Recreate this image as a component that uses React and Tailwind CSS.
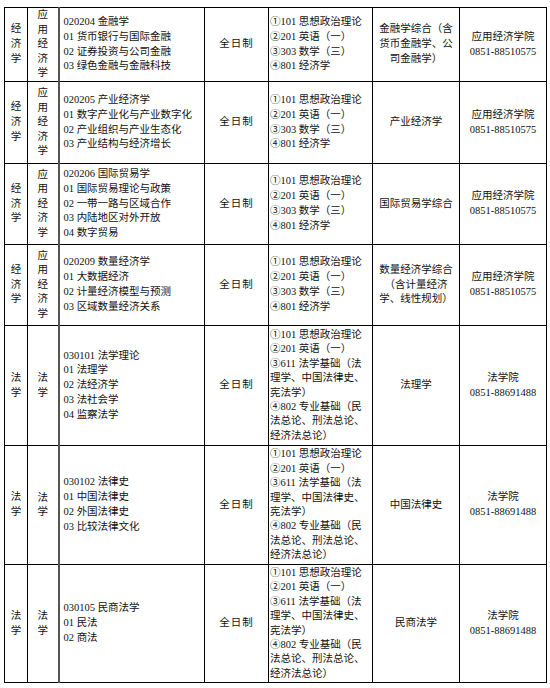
const font = { fontFamily: '"Liberation Serif", "Noto Sans CJK SC", serif' };

const econ5 = ["①101 思想政治理论", "②201 英语（一）", "③303 数学（三）", "④801 经济学"];
const law5 = [
  "①101 思想政治理论",
  "②201 英语（一）",
  "③611 法学基础（法",
  "理学、中国法律史、",
  "宪法学）",
  "④802 专业基础（民",
  "法总论、刑法总论、",
  "经济法总论）",
];

const rows = [
  {
    h: "h-[74px]",
    a: "经济学",
    b: "应用经济学",
    c: ["020204 金融学", "01 货币银行与国际金融", "02 证券投资与公司金融", "03 绿色金融与金融科技"],
    e: econ5,
    f: ["金融学综合（含", "货币金融学、公", "司金融学）"],
    g: ["应用经济学院", "0851-88510575"],
  },
  {
    h: "h-[82px]",
    a: "经济学",
    b: "应用经济学",
    c: ["020205 产业经济学", "01 数字产业化与产业数字化", "02 产业组织与产业生态化", "03 产业结构与经济增长"],
    e: econ5,
    f: ["产业经济学"],
    g: ["应用经济学院", "0851-88510575"],
  },
  {
    h: "h-[81px]",
    a: "经济学",
    b: "应用经济学",
    c: ["020206 国际贸易学", "01 国际贸易理论与政策", "02 一带一路与区域合作", "03 内陆地区对外开放", "04 数字贸易"],
    e: econ5,
    f: ["国际贸易学综合"],
    g: ["应用经济学院", "0851-88510575"],
  },
  {
    h: "h-[81px]",
    a: "经济学",
    b: "应用经济学",
    c: ["020209 数量经济学", "01 大数据经济", "02 计量经济模型与预测", "03 区域数量经济关系"],
    e: econ5,
    f: ["数量经济学综合", "（含计量经济", "学、线性规划）"],
    g: ["应用经济学院", "0851-88510575"],
  },
  {
    h: "h-[120px]",
    a: "法学",
    b: "法学",
    c: ["030101 法学理论", "01 法理学", "02 法经济学", "03 法社会学", "04 监察法学"],
    e: law5,
    f: ["法理学"],
    g: ["法学院", "0851-88691488"],
  },
  {
    h: "h-[119px]",
    a: "法学",
    b: "法学",
    c: ["030102 法律史", "01 中国法律史", "02 外国法律史", "03 比较法律文化"],
    e: law5,
    f: ["中国法律史"],
    g: ["法学院", "0851-88691488"],
  },
  {
    h: "h-[118px]",
    a: "法学",
    b: "法学",
    c: ["030105 民商法学", "01 民法", "02 商法"],
    e: law5,
    f: ["民商法学"],
    g: ["法学院", "0851-88691488"],
  },
];

function Lines({ items }) {
  return items.map((t, i) => (
    <div key={i} className="whitespace-nowrap">
      {t}
    </div>
  ));
}

export default function App() {
  const cell = "border border-black align-middle p-0";
  return (
    <div className="bg-white w-[550px] h-[688px] pt-[7px] pl-[4px] text-[10.5px] leading-[14.8px] text-[#111]" style={font}>
      <table className="table-fixed border-collapse w-[542px]">
        <colgroup>
          <col className="w-[23px]" />
          <col className="w-[31px]" />
          <col className="w-[146px]" />
          <col className="w-[64px]" />
          <col className="w-[104px]" />
          <col className="w-[87px]" />
          <col className="w-[87px]" />
        </colgroup>
        <tbody>
          {rows.map((r, i) => (
            <tr key={i} className={r.h}>
              <td className={`${cell} text-center`}>
                <Lines items={r.a.split("")} />
              </td>
              <td className={`${cell} text-center leading-[14.4px]`}>
                <Lines items={r.b.split("")} />
              </td>
              <td className={`${cell} border-l-2 border-l-[#555] pl-[4px]`}>
                <Lines items={r.c} />
              </td>
              <td className={`${cell} text-center tracking-[1px]`}>全日制</td>
              <td className={`${cell} pl-[1px] ${r.e.length > 4 ? "leading-[14.4px]" : ""}`}>
                <Lines items={r.e} />
              </td>
              <td className={`${cell} text-center`}>
                <Lines items={r.f} />
              </td>
              <td className={`${cell} text-center`}>
                <Lines items={r.g} />
              </td>
            </tr>
          ))}
        </tbody>
      </table>
    </div>
  );
}
